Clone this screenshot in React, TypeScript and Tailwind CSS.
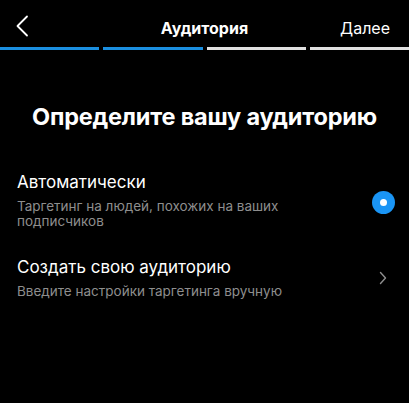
import React from 'react';

/* ── ICONS ──────────────────────────────────────────────────────────────── */

function BackIcon() {
  return (
    <svg width="14" height="22" viewBox="0 0 14 22" fill="none">
      <path d="M12 1.5 L2.5 11 L12 20.5" stroke="white" strokeWidth="1.8" strokeLinecap="round" strokeLinejoin="round" />
    </svg>
  );
}

function ChevronRight() {
  return (
    <svg width="8" height="14" viewBox="0 0 8 14" fill="none">
      <path d="M1.5 1.5 L6.5 7 L1.5 12.5" stroke="#8e8e8e" strokeWidth="1.4" strokeLinecap="round" strokeLinejoin="round" />
    </svg>
  );
}

/* ── COMPONENT ──────────────────────────────────────────────────────────── */

const STEPS = [true, true, false, false];

export default function App() {
  return (
    <div className="w-[409px] h-[403px] bg-black text-white font-['Inter','Liberation_Sans',sans-serif] overflow-hidden">
      <header className="h-[47px] flex items-center justify-between pl-[15px] pr-[19px]">
        <div className="w-[60px] flex items-center pt-[5px]">
          <BackIcon />
        </div>
        <span className="text-[16px] font-bold pt-[9px] pl-[4px]">Аудитория</span>
        <span className="w-[60px] text-right text-[16px] pt-[9px]">Далее</span>
      </header>

      <div className="flex gap-[4px] h-[3px]">
        {STEPS.map((active, i) => (
          <div key={i} className={`flex-1 ${active ? 'bg-[#1b8fe0]' : 'bg-[#e0e0e0]'}`} />
        ))}
      </div>

      <h1 className="mt-[49px] text-center text-[23.5px] font-bold tracking-[-0.2px]">
        Определите вашу аудиторию
      </h1>

      <div className="mt-[37px] pl-[17px] pr-[14px]">
        <div className="flex items-center justify-between">
          <div>
            <p className="text-[17px] leading-[22px]">Автоматически</p>
            <p className="mt-[6px] text-[13.5px] leading-[15px] text-[#8e8e8e] w-[290px]">
              Таргетинг на людей, похожих на ваших подписчиков
            </p>
          </div>
          <div className="w-[23px] h-[23px] rounded-full bg-[#1a95f5] flex items-center justify-center mt-[4px]">
            <div className="w-[7px] h-[7px] rounded-full bg-white" />
          </div>
        </div>

        <div className="mt-[27px] flex items-center justify-between">
          <div>
            <p className="text-[17px] leading-[22px]">Создать свою аудиторию</p>
            <p className="mt-[6px] text-[13.5px] leading-[15px] text-[#8e8e8e]">
              Введите настройки таргетинга вручную
            </p>
          </div>
          <div className="pr-[8px]">
            <ChevronRight />
          </div>
        </div>
      </div>
    </div>
  );
}
